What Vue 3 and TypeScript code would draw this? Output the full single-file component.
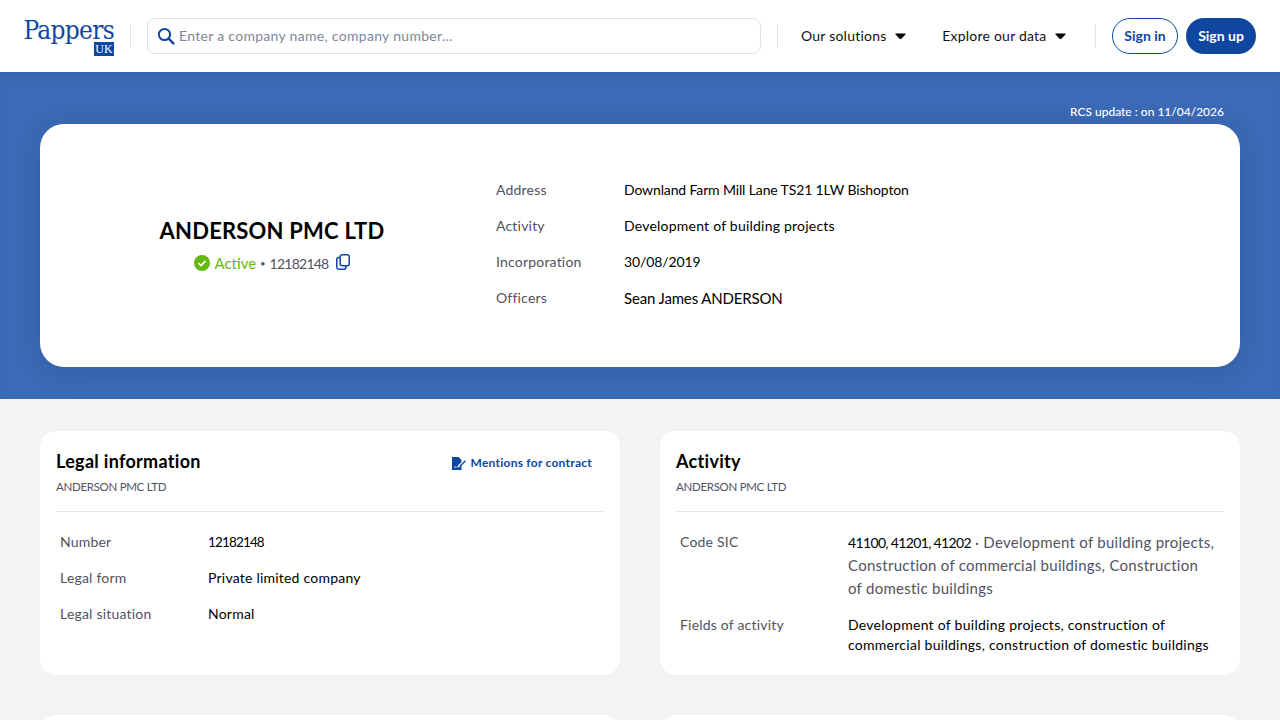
<script setup lang="ts">
const heroRows = [
  { label: 'Address', value: 'Downland Farm Mill Lane TS21 1LW Bishopton', kind: 'tight' },
  { label: 'Activity', value: 'Development of building projects', kind: '' },
  { label: 'Incorporation', value: '30/08/2019', kind: 'digits' },
  { label: 'Officers', value: 'Sean James ANDERSON', kind: 'large' },
]
const legalRows = [
  { label: 'Number', value: '12182148', kind: 'digits-tight' },
  { label: 'Legal form', value: 'Private limited company', kind: '' },
  { label: 'Legal situation', value: 'Normal', kind: '' },
]
</script>

<template>
  <div class="page">
    <header class="header">
      <div class="logo">
        <span class="logo-word">Pappers</span>
        <span class="logo-uk">UK</span>
      </div>
      <span class="sep sep-logo"></span>
      <div class="search">
        <svg class="search-icon" width="18" height="18" viewBox="0 0 18 18" fill="none">
          <circle cx="7.5" cy="7.5" r="5.6" stroke="#0f469f" stroke-width="2" />
          <path d="M11.6 11.6 L16.4 16.4" stroke="#0f469f" stroke-width="2.4" stroke-linecap="round" />
        </svg>
        <span class="placeholder">Enter a company name, company number...</span>
      </div>
      <span class="sep sep-search"></span>
      <nav class="nav">
        <span class="nav-item nav-solutions">Our solutions
          <svg class="caret" width="11" height="7" viewBox="0 0 11 7"><path d="M1 0.4 H10 Q11.2 0.4 10.4 1.6 L6.4 5.8 Q5.5 6.7 4.6 5.8 L0.6 1.6 Q-0.2 0.4 1 0.4 Z" fill="#000" /></svg>
        </span>
        <span class="nav-item">Explore our data
          <svg class="caret" width="11" height="7" viewBox="0 0 11 7"><path d="M1 0.4 H10 Q11.2 0.4 10.4 1.6 L6.4 5.8 Q5.5 6.7 4.6 5.8 L0.6 1.6 Q-0.2 0.4 1 0.4 Z" fill="#000" /></svg>
        </span>
      </nav>
      <span class="sep sep-nav"></span>
      <a class="btn btn-outline">Sign in</a>
      <a class="btn btn-solid">Sign up</a>
    </header>

    <section class="hero">
      <div class="rcs">RCS update : on 11/04/2026</div>
      <div class="hero-card">
        <div class="identity">
          <h1 class="company">ANDERSON PMC LTD</h1>
          <div class="status">
            <svg width="16" height="16" viewBox="0 0 16 16" class="check">
              <circle cx="8" cy="8" r="8" fill="#64b90f" />
              <path d="M4.5 8.2 L7 10.6 L11.5 5.8" fill="none" stroke="#fff" stroke-width="1.7" />
            </svg>
            <span class="active">Active</span>
            <span class="dot">•</span>
            <span class="number">12182148</span>
            <svg class="copy" width="14" height="16" viewBox="0 0 14 16" fill="none" stroke="#0f469f" stroke-width="1.5">
              <rect x="4.2" y="0.8" width="9" height="11" rx="2" />
              <path d="M4 3.6 H2.6 A1.8 1.8 0 0 0 0.8 5.4 V13.2 A2 2 0 0 0 2.8 15.2 H8 A1.8 1.8 0 0 0 9.8 13.4 V12" />
            </svg>
          </div>
        </div>
        <dl class="hero-rows">
          <div v-for="row in heroRows" :key="row.label" class="hero-row">
            <dt>{{ row.label }}</dt>
            <dd :class="row.kind">{{ row.value }}</dd>
          </div>
        </dl>
      </div>
    </section>

    <main class="grid">
      <article class="card">
        <div class="card-head">
          <div>
            <h2>Legal information</h2>
            <p>ANDERSON PMC LTD</p>
          </div>
          <a class="mentions">
            <svg width="14" height="13" viewBox="0 0 14 13">
              <path d="M0 0 H6.5 L9.5 3 V5 L6 8.6 L5.4 10.4 L8 10 L9.5 8.6 V13 H0 Z" fill="#0f469f" />
              <path d="M7 9.2 L13 3.2 L14 4.2 L8 10.2 Z" fill="#0f469f" />
              <path d="M2 10.4 C3 8.6 3.6 11 4.6 10" stroke="#fff" stroke-width="0.9" fill="none" />
            </svg>
            Mentions for contract
          </a>
        </div>
        <dl class="rows">
          <div v-for="row in legalRows" :key="row.label" class="row">
            <dt>{{ row.label }}</dt>
            <dd :class="row.kind">{{ row.value }}</dd>
          </div>
        </dl>
      </article>

      <article class="card">
        <div class="card-head">
          <div>
            <h2>Activity</h2>
            <p>ANDERSON PMC LTD</p>
          </div>
        </div>
        <dl class="rows rows-activity">
          <div class="row row-wide">
            <dt>Code SIC</dt>
            <dd class="sic"><span class="codes">41100, 41201, 41202</span> · Development of building projects, Construction of commercial buildings, Construction<br />of domestic buildings</dd>
          </div>
          <div class="row row-wide row-fields">
            <dt>Fields of activity</dt>
            <dd class="fields">Development of building projects, construction of commercial buildings, construction of domestic buildings</dd>
          </div>
        </dl>
      </article>

      <article class="card card-next"></article>
      <article class="card card-next"></article>
    </main>
  </div>
</template>

<style>
html, body { margin: 0; background: #f3f4f6; overflow: hidden; }
</style>

<style scoped>
.page {
  width: 1280px;
  height: 720px;
  overflow: hidden;
  background: #f3f4f6;
  font-family: "Lato", "Open Sans", sans-serif;
  font-size: 14px;
  color: #000;
}
.header {
  height: 72px;
  box-sizing: border-box;
  background: #fff;
  display: flex;
  align-items: center;
  padding: 0 24px;
}
.logo {
  width: 90px;
  height: 38px;
  margin-top: 1px;
  display: flex;
  flex-direction: column;
  align-items: flex-end;
  color: #0f469f;
}
.logo-word {
  font-family: "DejaVu Serif", serif;
  font-stretch: condensed;
  font-size: 26px;
  line-height: 24px;
  height: 24px;
  letter-spacing: -0.7px;
  white-space: nowrap;
}
.logo-uk {
  background: #0f469f;
  color: #fff;
  font-family: "Liberation Serif", serif;
  font-size: 12px;
  line-height: 14px;
  width: 20px;
  text-align: center;
}
.sep { width: 1px; height: 24px; background: #e2e4e8; flex: none; }
.sep-logo { margin: 0 16px; }
.search {
  width: 614px;
  height: 36px;
  box-sizing: border-box;
  border: 1px solid #dcdfe4;
  border-radius: 8px;
  display: flex;
  align-items: center;
  padding-left: 9px;
  gap: 4px;
}
.search-icon { flex: none; }
.placeholder { color: #80869a; font-size: 14px; letter-spacing: 0.3px; padding-bottom: 2px; }
.sep-search { margin-left: 16px; }
.nav { display: flex; margin-left: 23px; width: 294px; }
.nav-item { display: flex; align-items: center; letter-spacing: 0.22px; color: #111; padding-bottom: 2px; white-space: pre; }
.nav-solutions { margin-right: 36px; }
.caret { margin-left: 5px; margin-top: 3px; }
.btn {
  height: 36px;
  box-sizing: border-box;
  border-radius: 18px;
  display: flex;
  align-items: center;
  justify-content: center;
  font-weight: 700;
  font-size: 14px;
  padding-bottom: 2px;
}
.btn-outline { width: 66px; margin-left: 16px; border: 1px solid #0f469f; color: #0f469f; }
.btn-solid { width: 70px; margin-left: 8px; background: #0f469f; color: #fff; }
.hero {
  height: 327px;
  box-sizing: border-box;
  background: #3c6ab6;
  padding: 32px 40px 0;
  box-shadow: inset 0 10px 18px -12px rgba(15, 50, 110, 0.25);
}
.rcs {
  color: #fff;
  font-size: 12px;
  font-weight: 500;
  line-height: 16px;
  text-align: right;
  padding-right: 16px;
  height: 20px;
}
.hero-card {
  height: 243px;
  background: #fff;
  border-radius: 24px;
  box-shadow: 0 4px 24px rgba(15, 40, 90, 0.18);
  display: flex;
  align-items: center;
}
.identity {
  width: 464px;
  text-align: center;
  margin-bottom: 1px;
}
.company {
  margin: 0;
  font-size: 22px;
  line-height: 30px;
  font-weight: 700;
  letter-spacing: 0.2px;
}
.status {
  display: flex;
  align-items: center;
  justify-content: center;
  height: 22px;
  margin-top: 6px;
  color: #50535f;
  font-size: 15px;
}
.check { margin-right: 4px; }
.active { color: #64b90f; }
.dot { margin: 0 4px; font-size: 9px; }
.number { font-size: 14px; letter-spacing: -0.75px; }
.copy { margin-left: 7px; margin-top: -3px; }
.hero-rows { margin: 0 0 4px -8px; display: flex; flex-direction: column; gap: 16px; }
.hero-row { display: flex; line-height: 20px; }
dt { color: #50535f; width: 128px; letter-spacing: 0.2px; }
dd { margin: 0; color: #000; letter-spacing: 0.22px; }
dd.tight { letter-spacing: -0.13px; }
dd.digits { letter-spacing: -0.1px; }
dd.digits-tight { font-size: 13.5px; letter-spacing: -0.85px; }
dd.large { font-size: 15px; letter-spacing: -0.15px; }
.grid {
  display: grid;
  grid-template-columns: 580px 580px;
  gap: 40px;
  padding: 32px 40px;
}
.card {
  height: 244px;
  box-sizing: border-box;
  background: #fff;
  border-radius: 16px;
  padding: 16px;
  box-shadow: 0 1px 6px rgba(20, 30, 60, 0.02);
}
.card-head {
  display: flex;
  justify-content: space-between;
  align-items: flex-start;
  height: 64px;
  border-bottom: 1px solid #e4e6ea;
}
.card-head h2 {
  margin: 0;
  font-size: 18px;
  line-height: 28px;
  font-weight: 700;
  letter-spacing: 0.3px;
}
.card-head p {
  margin: 4px 0 0;
  color: #50535f;
  font-size: 11.5px;
  line-height: 16px;
  letter-spacing: -0.3px;
}
.mentions {
  display: flex;
  align-items: center;
  gap: 5px;
  margin: 8px 12px 0 0;
  color: #0f469f;
  font-size: 12px;
  line-height: 16px;
  font-weight: 700;
  letter-spacing: 0.25px;
}
.rows { margin: 20px 0 0; padding-left: 4px; display: flex; flex-direction: column; gap: 16px; }
.row { display: flex; line-height: 20px; }
.row dt { width: 148px; flex: none; }
.row-wide dt { width: 168px; }
.rows-activity { gap: 16px; }
.sic { color: #50535f; font-size: 15px; line-height: 22.5px; width: 370px; margin-top: -1.4px; letter-spacing: 0.27px; }
.codes { color: #000; font-size: 14px; letter-spacing: -0.65px; }
.fields { width: 370px; letter-spacing: 0.27px; }
.card-next { height: 120px; }
</style>
